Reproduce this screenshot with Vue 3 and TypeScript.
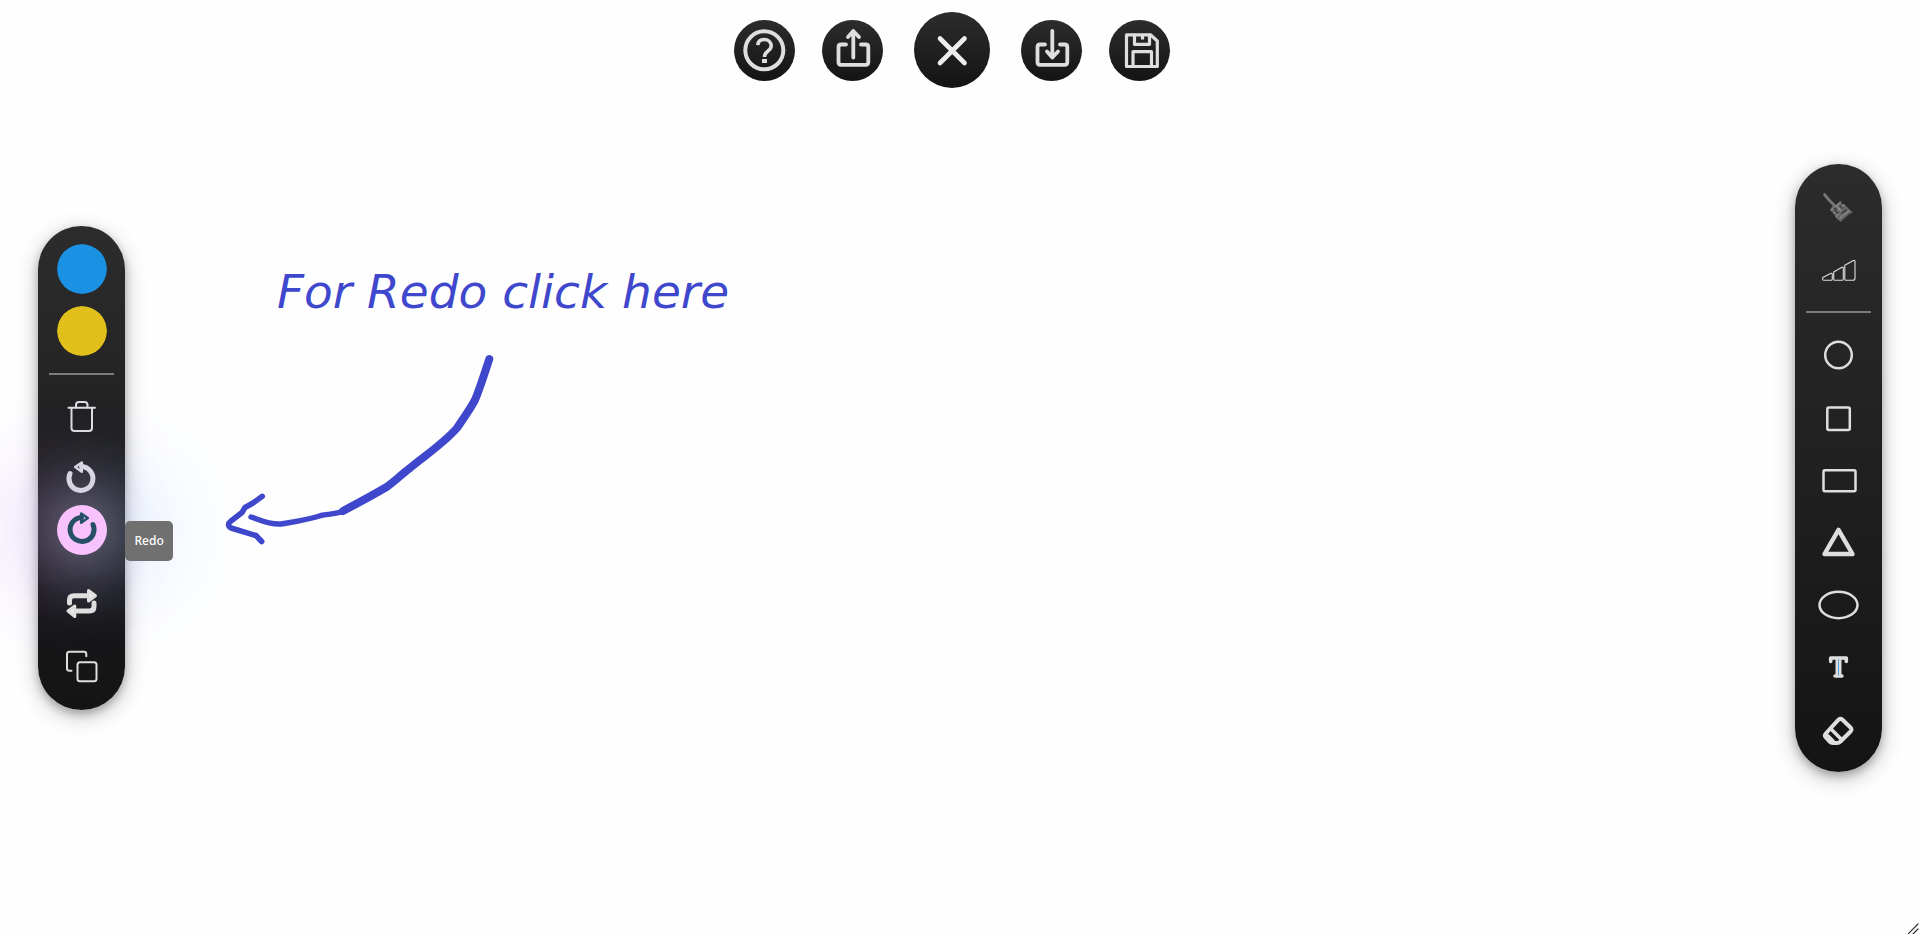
<script setup lang="ts">
import { ref } from 'vue'

interface Tool {
  id: string
  label: string
}

const fillColor = ref('#1a91e2')
const strokeColor = ref('#e2c01b')
const hovered = ref('redo')

const actions: Tool[] = [
  { id: 'trash', label: 'Clear' },
  { id: 'undo', label: 'Undo' },
  { id: 'redo', label: 'Redo' },
  { id: 'swap', label: 'Swap' },
  { id: 'copy', label: 'Copy' },
]
</script>

<template>
  <main class="board">
    <section class="canvas" aria-label="Drawing canvas">
      <p class="note">For Redo click here</p>
      <svg class="arrow" viewBox="0 0 300 220" aria-hidden="true">
        <path class="thick" d="M279.3 19C274 35 270 48 265 60C259 71 253 79 247 88C234 103 217 114 200 128C192 134 185 141 177 146.700C163 155 148 163 133 171" />
        <path class="thin" d="M134 171C126 174 119 174 111 175.500C98 180 82 182 71 184C60 185 50 180 41 177" />
        <path class="thin" d="M52.300 156.300L43 163L35 167.500L32 172.500L21 181Q16 185 21 188L46 195.500L51.700 201.500" />
      </svg>
    </section>

    <header class="topbar">
      <button class="round" type="button" aria-label="Help">
        <svg viewBox="0 0 61 61">
          <circle cx="30.300" cy="30.300" r="19" stroke-width="4" />
          <path d="M23.800 25.200C24 21 27 19.500 30.300 19.500C34 19.500 37.200 22 37.200 26C37.200 31 30.500 31 30.500 37" stroke-width="3.600" stroke-linecap="butt" />
          <path d="M30.500 39V43" stroke-width="5" stroke-linecap="butt" />
        </svg>
      </button>
      <button class="round" type="button" aria-label="Share">
        <svg viewBox="0 0 61 61" stroke-width="3.800">
          <path d="M24 24.500H19.500Q16.500 24.500 16.500 27V42Q16.500 44.800 19 44.800H43.500Q46.300 44.800 46.300 42V27Q46.300 24.500 43.500 24.500H39" />
          <path d="M31.300 37.500V11M26 17L31.300 11L37 17" />
        </svg>
      </button>
      <button class="round large" type="button" aria-label="Close">
        <svg viewBox="0 0 76 76">
          <path d="M26 26.500L50.500 51M50.500 26.500L26 51" stroke="#eee" stroke-width="4.600" />
        </svg>
      </button>
      <button class="round" type="button" aria-label="Download">
        <svg viewBox="0 0 61 61" stroke-width="3.800">
          <path d="M24 24.500H19.500Q16.500 24.500 16.500 27V42Q16.500 44.800 19 44.800H43.500Q46.300 44.800 46.300 42V27Q46.300 24.500 43.500 24.500H39" />
          <path d="M31.300 11V37.500M26 31.500L31.300 37.500L37 31.500" />
        </svg>
      </button>
      <button class="round" type="button" aria-label="Save">
        <svg viewBox="0 0 61 61" stroke-width="3.200" stroke-linejoin="miter">
          <path d="M17.500 14.800H41.500L48.300 21V46.500H17.500Z" />
          <path d="M25.500 15V24.300H40.500V15" />
          <path d="M33.500 16V19.500" stroke-linecap="butt" />
          <path d="M24 46V31.700H42.500V46" />
        </svg>
      </button>
    </header>

    <aside class="bar" aria-label="Actions">
      <label class="swatch">
        <input v-model="fillColor" type="color" aria-label="Fill colour" />
      </label>
      <label class="swatch">
        <input v-model="strokeColor" type="color" aria-label="Stroke colour" />
      </label>
      <hr />
      <div v-for="tool in actions" :key="tool.id" class="slot">
        <button class="tool" :class="{ glowing: hovered === tool.id }" type="button" :aria-label="tool.label">
          <svg v-if="tool.id === 'trash'" viewBox="0 0 50 50" stroke-width="2">
            <path d="M11.500 15.700H38M14.500 16V36Q14.500 39 17.500 39H32Q35 39 35 36V16" />
            <path d="M19 15.500V13Q19 9.900 22 9.900H27.500Q30.500 9.900 30.500 13V15.500" />
          </svg>
          <svg v-else-if="tool.id === 'undo' || tool.id === 'redo'" viewBox="0 0 50 50" :class="tool.id">
            <path d="M13 19.500A12 12 0 1 0 24.500 12.500" stroke-width="5" />
            <path d="M18.200 13L24.800 8.500V17.800Z" stroke-width="2.600" />
          </svg>
          <svg v-else-if="tool.id === 'swap'" viewBox="0 0 50 50">
            <path d="M12.500 25V22Q12.500 17.700 17 17.700H30M37 25V28.500Q37 33 32.500 33H20" stroke-width="5" />
            <path d="M31.500 12.500L38.500 17.700L31.500 23ZM17.800 28L11 33L17.800 38.500Z" fill="#eee" stroke-width="3" />
          </svg>
          <svg v-else viewBox="0 0 50 50" stroke-width="2">
            <rect x="20.500" y="22.200" width="19" height="19" rx="2.500" />
            <path d="M29.300 16.300V14.200Q29.300 11.800 27 11.800H12.500Q10 11.800 10 14.200V28.500Q10 30.800 12.500 30.800H14.500" />
          </svg>
        </button>
        <span v-if="hovered === tool.id" class="tip" role="tooltip">{{ tool.label }}</span>
      </div>
    </aside>

    <aside class="bar shapes" aria-label="Shapes">
      <button class="tool" type="button" aria-label="Brush">
        <svg viewBox="0 0 50 50">
          <path d="M11.500 12.500L16 18L22 24" stroke="#777" stroke-width="2.800" />
          <path d="M17 28L20 23L22 24L27 19L29 22L31 22L39.500 30.300L28 40L24 37L20 31Z" fill="#686868" stroke="none" />
          <path d="M18 28L28 20M21 31L31 23M24 24L28 29M27 36L36 29M23 35L26 32" stroke="#9a9a9a" stroke-width="1" />
          <path d="M21 26L24 28M27 24L29 26M29 31L33 28M22 29L25 31M29 39L37 32" stroke="#333" stroke-width="1.200" />
        </svg>
      </button>
      <button class="tool" type="button" aria-label="Line width">
        <svg viewBox="0 0 50 50" stroke-width="1.100">
          <path d="M9.800 32.500L18 28.300Q19.300 28 19.300 29.300V34Q19.300 35.300 18 35.300H11Q9 35.300 9.800 32.500Z" />
          <path d="M20.700 27L28.500 22.500Q30.300 21.500 30.300 23V34Q30.300 35.300 29 35.300H22Q20.700 35.300 20.700 34Z" />
          <path d="M31.800 20.300L40 15.700Q42 14.800 42 16.500V33Q42 35.300 40 35.300H33Q31.800 35.300 31.800 34Z" />
        </svg>
      </button>
      <hr />
      <button class="tool" type="button" aria-label="Circle">
        <svg viewBox="0 0 50 50"><circle cx="25.500" cy="26" r="13.300" stroke-width="2.500" /></svg>
      </button>
      <button class="tool" type="button" aria-label="Square">
        <svg viewBox="0 0 50 50"><rect x="14.300" y="15.500" width="22.500" height="22.500" rx="1.500" stroke-width="2.500" /></svg>
      </button>
      <button class="tool" type="button" aria-label="Rectangle">
        <svg viewBox="0 0 50 50"><rect x="10.500" y="15.300" width="32" height="21" rx="1.500" stroke-width="2.500" /></svg>
      </button>
      <button class="tool" type="button" aria-label="Triangle">
        <svg viewBox="0 0 50 50"><path d="M25.500 11.800L39.500 36H11.500Z" stroke-width="4.400" /></svg>
      </button>
      <button class="tool" type="button" aria-label="Ellipse">
        <svg viewBox="0 0 50 50"><ellipse cx="25.500" cy="24" rx="19" ry="13.200" stroke-width="2.500" /></svg>
      </button>
      <button class="tool" type="button" aria-label="Text">
        <svg viewBox="0 0 50 50">
          <path d="M17.700 17.500V14H33.300V17.500" stroke-width="3.600" />
          <path d="M25.500 14V32" stroke-width="6" stroke-linecap="butt" />
          <path d="M22 32H29" stroke-width="3.400" />
          <path d="M25.500 15V31.500" stroke="#4aa3df" stroke-width="1" stroke-linecap="butt" />
        </svg>
      </button>
      <button class="tool" type="button" aria-label="Eraser">
        <svg viewBox="0 0 50 50" stroke-width="4">
          <path d="M25.500 12.700Q27.500 11 29.500 12.700L37.500 20.500Q39.500 22.500 37.500 24.500L27.500 34.500Q26 36 24 36H20Q18 36 16.500 34.500L12.800 30.500Q11 28.500 12.800 26.500Z" />
          <path d="M18 22L28 32M15 29L20 34" stroke-width="3.600" />
        </svg>
      </button>
    </aside>

    <svg class="grip" viewBox="0 0 12 12" aria-hidden="true">
      <path d="M0 12L10 2M5 12L10 7" />
    </svg>
  </main>
</template>

<style>
html,
body {
  margin: 0;
  background: #fff;
}
</style>

<style scoped>
.board {
  position: relative;
  box-sizing: border-box;
  min-height: 100vh;
  padding: 14px 38px 12px;
  display: flex;
  align-items: center;
  justify-content: space-between;
  overflow: hidden;
  background: #fefefe;
  font-family: "Noto Sans", "Open Sans", sans-serif;
}

button {
  padding: 0;
  border: 0;
  cursor: pointer;
}

svg {
  display: block;
  fill: none;
  stroke: #dedede;
  stroke-linecap: round;
  stroke-linejoin: round;
}

.canvas {
  position: absolute;
  inset: 0;
}

.note {
  position: absolute;
  left: 277px;
  top: 257px;
  margin: 0;
  color: #3f48cc;
  font-family: "DejaVu Sans", sans-serif;
  font-size: 47px;
  font-style: italic;
  line-height: 70px;
  white-space: nowrap;
}

.arrow {
  position: absolute;
  left: 210px;
  top: 340px;
  width: 300px;
  height: 220px;
  stroke: #3f48cc;
}

.thick {
  stroke-width: 8;
}

.thin {
  stroke-width: 5.5;
}

.topbar {
  position: absolute;
  top: 12px;
  left: 0;
  right: 16px;
  display: flex;
  align-items: center;
  justify-content: center;
  gap: 27px;
}

.round {
  width: 61px;
  height: 61px;
  border-radius: 50%;
  background: linear-gradient(#2c2c2c, #141414);
}

.round svg {
  width: 100%;
  height: 100%;
}

.round.large {
  width: 76px;
  height: 76px;
  margin: 0 4px;
}

.bar {
  position: relative;
  box-sizing: border-box;
  width: 87px;
  padding: 18px 0 20px;
  display: flex;
  flex-direction: column;
  align-items: center;
  gap: 12px;
  border-radius: 44px;
  background: linear-gradient(#2c2c2c, #141414);
  box-shadow: 0 4px 8px rgba(0, 0, 0, 0.24), 0 6px 22px rgba(0, 0, 0, 0.24);
}

.bar hr {
  width: 65px;
  height: 2px;
  margin: 5px 0;
  border: 0;
  background: #7d7d7d;
}

.shapes {
  gap: 13px;
  padding: 18px 1px 15px 0;
}

.shapes hr {
  margin: 3px 0;
}

.swatch,
.slot,
.tool {
  width: 50px;
  height: 50px;
}

.swatch input {
  display: block;
  width: 50px;
  height: 50px;
  padding: 0;
  border: 0;
  border-radius: 50%;
  overflow: hidden;
  appearance: none;
  background: none;
  cursor: pointer;
}

.swatch input::-webkit-color-swatch-wrapper {
  padding: 0;
}

.swatch input::-webkit-color-swatch {
  border: 0;
  border-radius: 50%;
}

.slot {
  position: relative;
}

.tool {
  display: block;
  position: relative;
  border-radius: 50%;
  background: none;
}

.tool svg {
  width: 50px;
  height: 50px;
}

.tool .redo {
  transform: scaleX(-1);
  transform-origin: 49% 50%;
  stroke: #264f63;
}

.tool.glowing {
  background: #f8c2fc;
  transform: translateY(-11px);
  box-shadow:
    0 0 70px rgba(245, 245, 255, 0.95),
    -30px 0 100px rgba(190, 70, 240, 0.75),
    30px 0 100px rgba(70, 160, 255, 0.75);
}

.tip {
  position: absolute;
  left: 68px;
  top: 5px;
  padding: 0 9px 0 10px;
  border-radius: 5px;
  background: #707070;
  color: #fff;
  font-size: 12px;
  font-weight: 500;
  line-height: 40px;
}

.grip {
  position: absolute;
  right: 0;
  bottom: 0;
  width: 12px;
  height: 12px;
  stroke: #333;
  stroke-width: 1.2;
}
</style>
